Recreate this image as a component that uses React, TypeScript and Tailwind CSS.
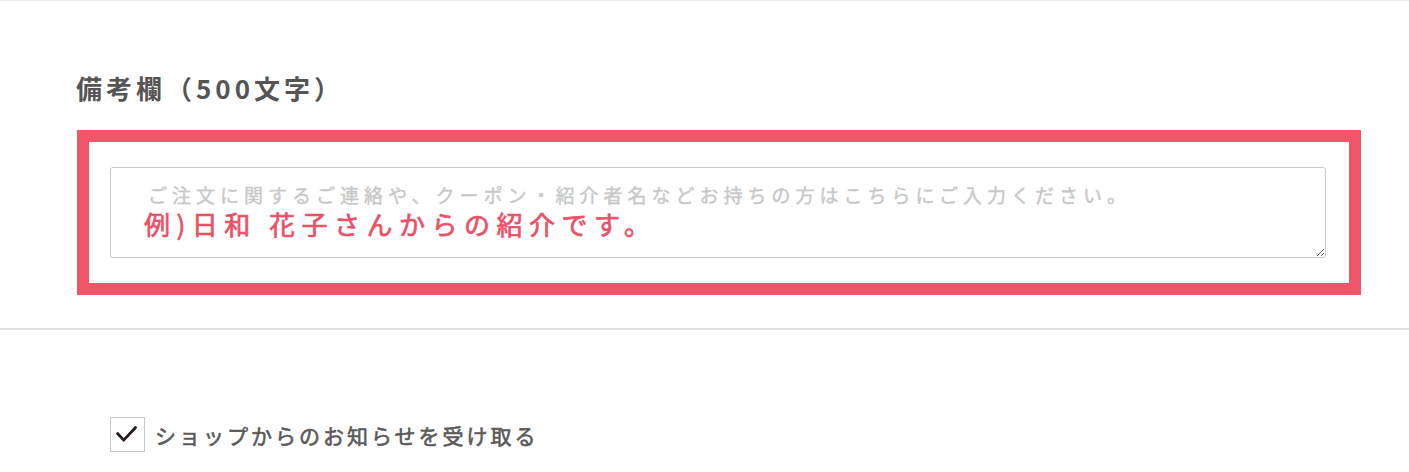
import React from 'react';

export default function App() {
  return (
    <div className="min-h-[472px] w-full bg-white border-t border-[#ebebeb] font-['Noto_Sans_CJK_JP','Noto_Sans',sans-serif]">
      {/* 備考欄 */}
      <section className="pl-[76px] pr-[48px] pt-[69px] pb-[33px]">
        <h2 className="text-[26px] leading-[36px] font-bold tracking-[4px] text-[#555555]">
          備考欄（500文字）
        </h2>
        <div className="mt-[24px] ml-px w-[1284px] border-[12px] border-[#f0566a] pt-[25px] pl-[21px] pr-[23px] pb-[25px]">
          <div className="relative">
            <textarea
              className="block w-full h-[91px] border border-[#c9c9c9] rounded-[3px] pl-[37px] pt-[14px] text-[19px] leading-[26px] tracking-[5px] font-normal [-webkit-text-stroke:0.4px_currentColor] text-[#555555] placeholder:text-[#c8c8c8] outline-none"
              placeholder="ご注文に関するご連絡や、クーポン・紹介者名などお持ちの方はこちらにご入力ください。"
            />
            <p className="pointer-events-none absolute left-[34px] top-[44px] text-[26px] leading-[26px] tracking-[6.5px] font-normal [-webkit-text-stroke:0.7px_#ea5169] text-[#ea5169]">
              例)日和 花子さんからの紹介です。
            </p>
          </div>
        </div>
      </section>

      <div className="h-[2px] bg-[#e0e4e4]" />

      {/* お知らせ */}
      <div className="pl-[110px] pt-[87px] pb-[20px]">
        <label className="flex items-center gap-[10px]">
          <span className="flex w-[35px] h-[35px] items-center justify-center border border-[#c8c8c8] bg-white">
            <svg width="35" height="35" viewBox="0 0 35 35" fill="none">
              <path d="M7 16.5 L13.5 23.5 L26 10" stroke="#2a1a1a" strokeWidth="3" strokeLinecap="round" strokeLinejoin="round" />
            </svg>
          </span>
          <span className="text-[21px] leading-[30px] font-normal [-webkit-text-stroke:0.6px_#5a5a5a] tracking-[3px] text-[#5a5a5a]">
            ショップからのお知らせを受け取る
          </span>
        </label>
      </div>
    </div>
  );
}
